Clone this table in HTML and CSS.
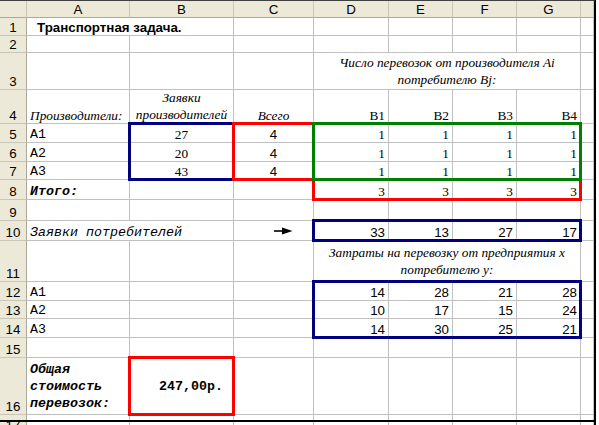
FILE: index.html
```html
<!DOCTYPE html>
<html lang="ru">
<head>
<meta charset="utf-8">
<title>Транспортная задача</title>
<link rel="stylesheet" href="styles.css">
</head>
<body>
<div class="frame">
  <div class="stack">
    <div class="sheet">
      <!-- header -->
      <div class="h"></div><div class="h">A</div><div class="h">B</div><div class="h">C</div><div class="h">D</div><div class="h">E</div><div class="h">F</div><div class="h">G</div><div class="h"></div>
      <!-- 1 -->
      <div class="rh">1</div><div class="c span2 title">Транспортная задача.</div><div class="c"></div><div class="c"></div><div class="c"></div><div class="c"></div><div class="c"></div><div class="c"></div>
      <!-- 2 -->
      <div class="rh">2</div><div class="c"></div><div class="c"></div><div class="c"></div><div class="c"></div><div class="c"></div><div class="c"></div><div class="c"></div><div class="c"></div>
      <!-- 3 -->
      <div class="rh">3</div><div class="c"></div><div class="c"></div><div class="c"></div><div class="c span4 wrap it mid"><span>Число перевозок от производителя Ai<br>потребителю Bj:</span></div><div class="c"></div>
      <!-- 4 -->
      <div class="rh">4</div><div class="c it">Производители:</div><div class="c wrap it"><span>Заявки<br>производителей</span></div><div class="c it ctr">Всего</div><div class="c serif r">B1</div><div class="c serif r">B2</div><div class="c serif r">B3</div><div class="c serif r">B4</div><div class="c"></div>
      <!-- 5 -->
      <div class="rh">5</div><div class="c mono">A1</div><div class="c serif ctr">27</div><div class="c ctr">4</div><div class="c serif r">1</div><div class="c serif r">1</div><div class="c serif r">1</div><div class="c serif r">1</div><div class="c"></div>
      <!-- 6 -->
      <div class="rh">6</div><div class="c mono">A2</div><div class="c serif ctr">20</div><div class="c ctr">4</div><div class="c serif r">1</div><div class="c serif r">1</div><div class="c serif r">1</div><div class="c serif r">1</div><div class="c"></div>
      <!-- 7 -->
      <div class="rh">7</div><div class="c mono">A3</div><div class="c serif ctr">43</div><div class="c ctr">4</div><div class="c serif r">1</div><div class="c serif r">1</div><div class="c serif r">1</div><div class="c serif r">1</div><div class="c"></div>
      <!-- 8 -->
      <div class="rh">8</div><div class="c mono-bi">Итого:</div><div class="c"></div><div class="c"></div><div class="c serif r">3</div><div class="c serif r">3</div><div class="c serif r">3</div><div class="c serif r">3</div><div class="c"></div>
      <!-- 9 -->
      <div class="rh">9</div><div class="c"></div><div class="c"></div><div class="c"></div><div class="c"></div><div class="c"></div><div class="c"></div><div class="c"></div><div class="c"></div>
      <!-- 10 -->
      <div class="rh">10</div><div class="c span2 mono-it">Заявки потребителей</div><div class="c arrow-cell"><svg class="arrow" width="19" height="8" viewBox="0 0 19 8"><line x1="0" y1="4" x2="10" y2="4" stroke="#000" stroke-width="1.6"/><polygon points="8,0.5 18.5,4 8,7.5" fill="#000"/></svg></div><div class="c r">33</div><div class="c r">13</div><div class="c r">27</div><div class="c r">17</div><div class="c"></div>
      <!-- 11 -->
      <div class="rh">11</div><div class="c"></div><div class="c"></div><div class="c"></div><div class="c span4 wrap it mid"><span>Затраты на перевозку от предприятия x<br>потребителю y:</span></div><div class="c"></div>
      <!-- 12 -->
      <div class="rh">12</div><div class="c mono">A1</div><div class="c"></div><div class="c"></div><div class="c r">14</div><div class="c r">28</div><div class="c r">21</div><div class="c r">28</div><div class="c"></div>
      <!-- 13 -->
      <div class="rh">13</div><div class="c mono">A2</div><div class="c"></div><div class="c"></div><div class="c r">10</div><div class="c r">17</div><div class="c r">15</div><div class="c r">24</div><div class="c"></div>
      <!-- 14 -->
      <div class="rh">14</div><div class="c mono">A3</div><div class="c"></div><div class="c"></div><div class="c r">14</div><div class="c r">30</div><div class="c r">25</div><div class="c r">21</div><div class="c"></div>
      <!-- 15 -->
      <div class="rh">15</div><div class="c"></div><div class="c"></div><div class="c"></div><div class="c"></div><div class="c"></div><div class="c"></div><div class="c"></div><div class="c"></div>
      <!-- 16 -->
      <div class="rh">16</div><div class="c wrap mono-bi mid"><span>Общая<br>стоимость<br>перевозок:</span></div><div class="c mono-b r mid total">247,00р.</div><div class="c"></div><div class="c"></div><div class="c"></div><div class="c"></div><div class="c"></div><div class="c"></div>
      <!-- 17 -->
      <div class="rh">17</div><div class="c"></div><div class="c"></div><div class="c"></div><div class="c"></div><div class="c"></div><div class="c"></div><div class="c"></div><div class="c"></div>
    </div>
    <div class="marks">
      <div class="box navy b-prod"></div>
      <div class="box red b-total-col"></div>
      <div class="box red b-sum-row"></div>
      <div class="box green b-plan"></div>
      <div class="box navy b-demand"></div>
      <div class="box navy b-cost"></div>
      <div class="box red b-result"></div>
      <div class="edge"></div>
    </div>
  </div>
</div>
</body>
</html>
```
FILE: styles.css
```css
* { box-sizing: border-box; }
html, body { margin: 0; padding: 0; background: #fff; }

.frame {
  width: 596px;
  height: 425px;
  overflow: hidden;
  border-top: 1px solid #404040;
  border-right: 2px solid #000;
  background: #fff;
}

.stack { display: grid; }

.sheet, .marks {
  grid-area: 1 / 1;
  display: grid;
  grid-template-columns: 27px 103px 104px 80px 75px 64px 64px 64px 13px;
  grid-template-rows: 17px 18px 17px 37px 34px 19px 19px 18px 20px 21px 20px 41px 19px 18px 19px 20px 57px 19px;
}

.marks { pointer-events: none; }

.sheet > div {
  display: flex;
  align-items: flex-end;
  min-width: 0;
  padding: 0 3px 0 3px;
  border-right: 1px solid #c0c0c0;
  border-bottom: 1px solid #c0c0c0;
  font: 13.33px/15px "Liberation Sans", Arial, sans-serif;
  color: #000;
  white-space: nowrap;
}

.sheet > .h {
  background: #ece9d8;
  justify-content: center;
  align-items: center;
  border-right-color: #c9c6b5;
  border-bottom-color: #aca899;
  padding: 0;
}

.sheet > .rh {
  background: #ece9d8;
  justify-content: center;
  border-right-color: #aca899;
  border-bottom-color: #c9c6b5;
  padding: 0;
}

.span2 { grid-column: span 2; }
.span4 { grid-column: span 4; }

.sheet > .title { font-weight: bold; padding-left: 10px; }

.sheet > .it { font-family: "Liberation Serif", "Times New Roman", serif; font-style: italic; }
.sheet > .serif { font-family: "Liberation Serif", "Times New Roman", serif; }
.sheet > .mono { font-family: "Liberation Mono", "Courier New", monospace; }
.sheet > .mono-it { font-family: "Liberation Mono", "Courier New", monospace; font-style: italic; }
.sheet > .mono-bi { font-family: "Liberation Mono", "Courier New", monospace; font-style: italic; font-weight: bold; }
.sheet > .mono-b { font-family: "Liberation Mono", "Courier New", monospace; font-weight: bold; }

.sheet > .wrap {
  white-space: nowrap;
  line-height: 17px;
  text-align: center;
  justify-content: center;
}
.sheet > .mono-bi.wrap { text-align: left; justify-content: flex-start; }

.sheet > .mid { align-items: center; }
.sheet > .r { justify-content: flex-end; }
.sheet > .ctr { justify-content: center; }
.sheet > .total { padding-right: 10px; }

.sheet > .arrow-cell { justify-content: flex-end; align-items: center; padding-right: 20px; }
.arrow { display: block; }

/* thick range borders, centred on the gridlines */
.box { border: 3px solid; margin: -2px -1px -1px -2px; }
.navy { border-color: #000080; }
.red { border-color: #ff0000; }
.green { border-color: #008000; }

.b-prod { grid-area: 6 / 3 / 9 / 4; }
.b-total-col { grid-area: 6 / 4 / 9 / 5; }
.b-sum-row { grid-area: 9 / 5 / 10 / 9; }
.b-plan { grid-area: 6 / 5 / 9 / 9; }
.b-demand { grid-area: 11 / 5 / 12 / 9; }
.b-cost { grid-area: 13 / 5 / 16 / 9; }
.b-result { grid-area: 17 / 3 / 18 / 4; }

.edge {
  grid-area: 18 / 1 / 19 / 10;
  align-self: start;
  margin-top: 5px;
  height: 2px;
  background: #000;
}
```
